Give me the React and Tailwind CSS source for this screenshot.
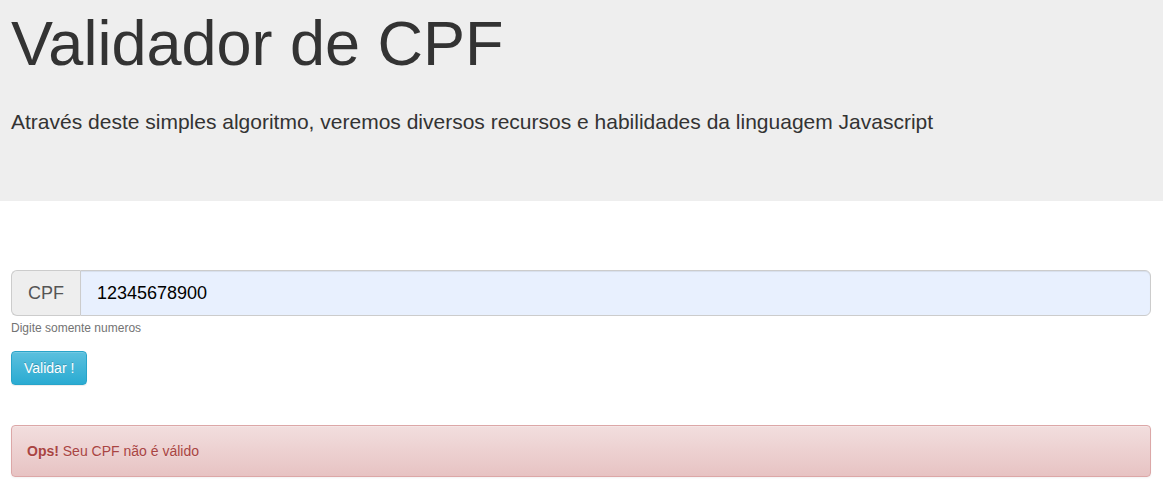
export default function App() {
	return (
		<div className="min-h-[501px] bg-white font-['Liberation_Sans',Arial,sans-serif] text-[14px] leading-[20px] text-[#333]">
			{/* Jumbotron */}
			<div className="h-[201px] bg-[#eeeeee] pl-[11px] pt-[9px]">
				<h1 className="text-[63px] leading-[69px] font-normal text-[#333]">Validador de CPF</h1>
				<p className="mt-[29px] text-[21px] leading-[30px] font-normal text-[#333]">
					Através deste simples algoritmo, veremos diversos recursos e habilidades da linguagem Javascript
				</p>
			</div>

			<div className="ml-[11px] w-[1140px] pt-[69px]">
				{/* CPF input group */}
				<div className="flex h-[46px]">
					<span className="flex items-center rounded-l-[6px] border border-r-0 border-[#cccccc] bg-[#eeeeee] px-[16px] text-[18px] text-[#555]">
						CPF
					</span>
					<input
						type="text"
						defaultValue="12345678900"
						readOnly
						className="flex-1 rounded-r-[6px] border border-[#cccccc] bg-[#e8f0fe] px-[16px] text-[18px] text-black outline-none shadow-[inset_0_1px_1px_rgba(0,0,0,0.075)]"
					/>
				</div>
				<p className="mt-[4px] text-[12px] leading-[17px] text-[#737373]">Digite somente numeros</p>

				<button className="mt-[14px] h-[34px] rounded-[4px] border border-[#28a4c9] bg-[linear-gradient(#5bc0de,#2aabd2)] px-[12px] text-[14px] text-white [text-shadow:0_-1px_0_rgba(0,0,0,0.2)] shadow-[inset_0_1px_0_rgba(255,255,255,0.15),0_1px_1px_rgba(0,0,0,0.075)]">
					Validar !
				</button>

				{/* Alert */}
				<div className="mt-[40px] rounded-[4px] border border-[#dca7a7] bg-[linear-gradient(#f2dede,#e7c3c3)] p-[15px] text-[14px] leading-[20px] text-[#a94442] [text-shadow:0_1px_0_rgba(255,255,255,0.2)] shadow-[inset_0_1px_0_rgba(255,255,255,0.25),0_1px_2px_rgba(0,0,0,0.05)]">
					<strong className="font-bold">Ops!</strong> Seu CPF não é válido
				</div>
			</div>
		</div>
	);
}
